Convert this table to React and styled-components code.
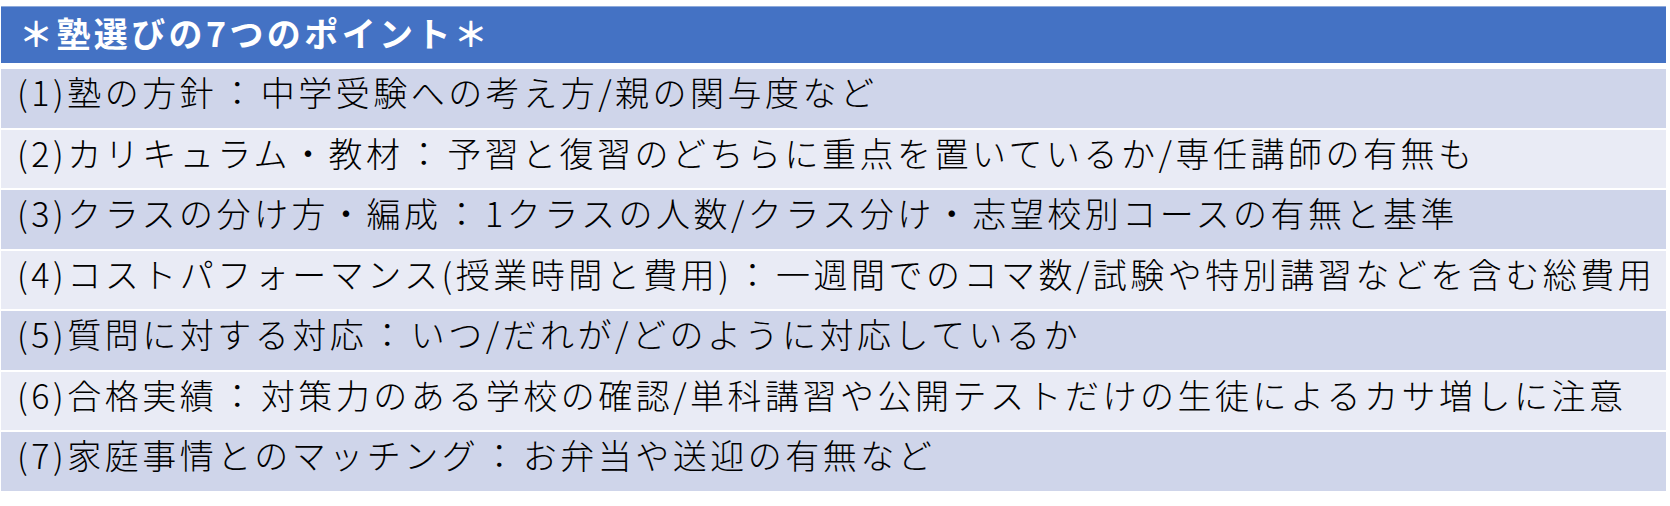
import React from 'react';
import styled, { createGlobalStyle } from 'styled-components';

const points = [
  { no: 1, title: '塾の方針', body: '中学受験への考え方/親の関与度など' },
  { no: 2, title: 'カリキュラム・教材', body: '予習と復習のどちらに重点を置いているか/専任講師の有無も' },
  { no: 3, title: 'クラスの分け方・編成', body: '1クラスの人数/クラス分け・志望校別コースの有無と基準' },
  { no: 4, title: 'コストパフォーマンス(授業時間と費用)', body: '一週間でのコマ数/試験や特別講習などを含む総費用' },
  { no: 5, title: '質問に対する対応', body: 'いつ/だれが/どのように対応しているか' },
  { no: 6, title: '合格実績', body: '対策力のある学校の確認/単科講習や公開テストだけの生徒によるカサ増しに注意' },
  { no: 7, title: '家庭事情とのマッチング', body: 'お弁当や送迎の有無など' },
];

function App() {
  return (
    <>
      <GlobalStyle />
      <Table>
        <Header>＊塾選びの7つのポイント＊</Header>
        <Rows>
          {points.map((p) => (
            <Row key={p.no} $odd={p.no % 2 === 1}>
              ({p.no}){p.title}<Colon>：</Colon>{p.body}
            </Row>
          ))}
        </Rows>
      </Table>
    </>
  );
}

const GlobalStyle = createGlobalStyle`
  body {
    margin: 0;
    background: #ffffff;
    font-family: "Noto Sans CJK JP", "Noto Sans", sans-serif;
  }
`;

const Table = styled.div`
  width: 1665px;
  margin: 6px 0 0 1px;
  display: flex;
  flex-direction: column;
  gap: 6px;
`;

const Header = styled.div`
  height: 57px;
  background: #4472c4;
  border-top: 1px solid #8eaadb;
  box-sizing: border-box;
  color: #ffffff;
  font-weight: 700;
  font-size: 34px;
  letter-spacing: 3.4px;
  padding: 2px 0 0 18px;
  line-height: 48px;
  white-space: nowrap;
`;

const Rows = styled.div`
  display: flex;
  flex-direction: column;
  gap: 2px;
`;

const Row = styled.div`
  height: 58.5px;
  box-sizing: border-box;
  background: ${(p) => (p.$odd ? '#cfd5ea' : '#e9ebf5')};
  color: #000000;
  font-size: 34px;
  font-weight: 300;
  letter-spacing: 3.5px;
  padding: 0 0 0 16px;
  line-height: 46px;
  white-space: nowrap;
`;

const Colon = styled.span`
  margin: 0 3px;
`;

export default App;
